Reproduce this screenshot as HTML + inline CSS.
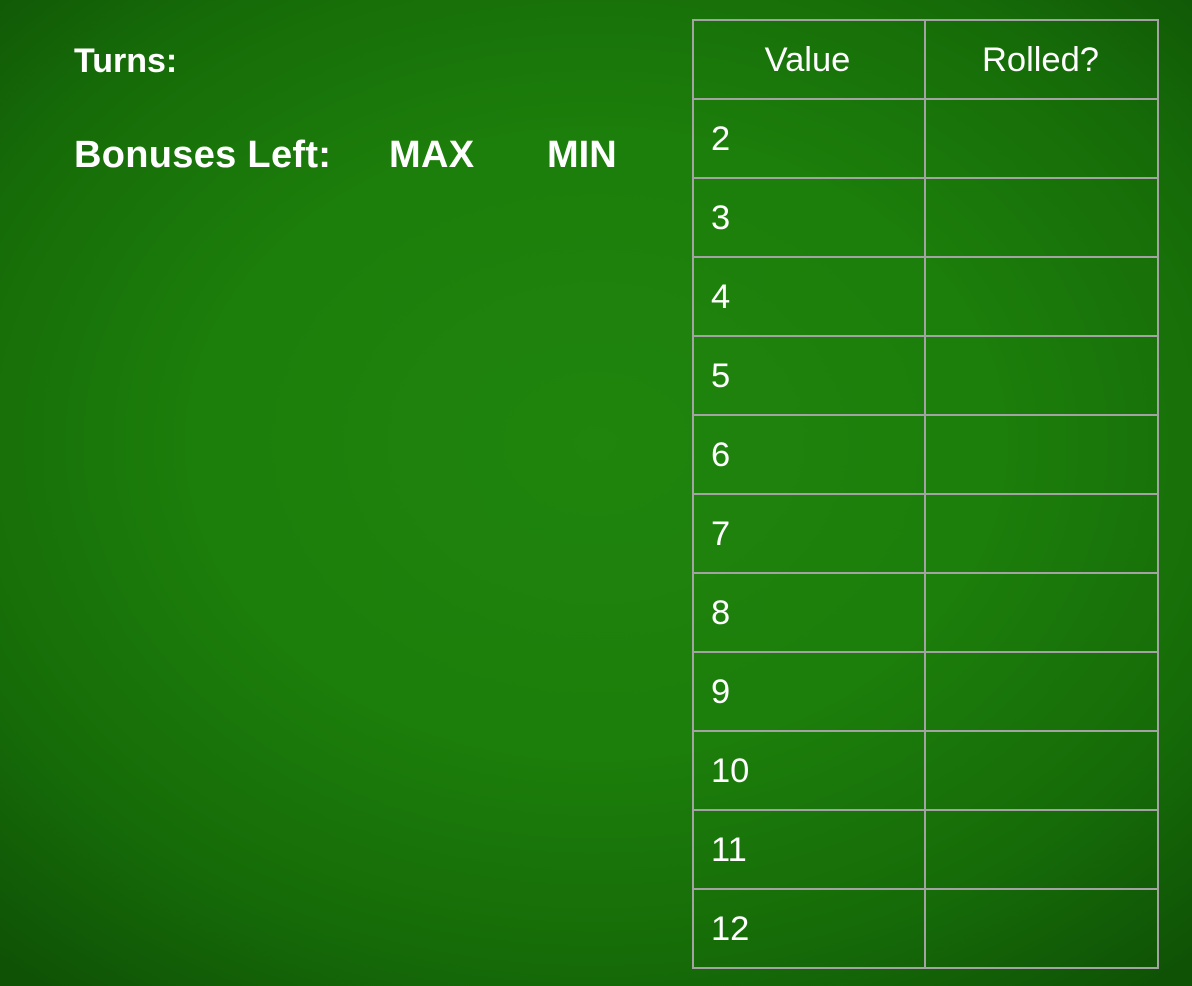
<!DOCTYPE html>
<html><head><style>
html,body{margin:0;padding:0}
body{width:1192px;height:986px;overflow:hidden;position:relative;font-family:"Liberation Sans",Arial,sans-serif;color:#fff;
background:radial-gradient(ellipse 75% 70% at 50% 45%,#1f850c 0%,#1c7e0b 45%,#166c08 75%,#0f5206 100%);}
.t{position:absolute;font-weight:bold;line-height:40px;white-space:nowrap}
.h{position:absolute;left:0;height:2px;background:#a3a3a3}
.c{position:absolute;font-size:34.5px;line-height:40px;white-space:nowrap}
.cc{position:absolute;font-size:34.5px;line-height:40px;text-align:center;width:231px}
</style></head><body>
<div class="t" style="left:74px;top:41px;font-size:34px">Turns:</div>
<div class="t" style="left:74px;top:135px;font-size:38px;letter-spacing:0.3px">Bonuses Left:</div>
<div class="t" style="left:389px;top:135px;font-size:38px;letter-spacing:0.3px">MAX</div>
<div class="t" style="left:547px;top:135px;font-size:38px">MIN</div>
<div style="position:absolute;left:692px;top:19px;width:463px;height:946px;border:2px solid #a3a3a3"></div>
<div style="position:absolute;left:924px;top:19px;width:2px;height:948px;background:#a3a3a3"></div>
<div style="position:absolute;left:692px;top:0;width:467px;height:986px">
<div class="h" style="top:98px;width:467px"></div>
<div class="h" style="top:177px;width:467px"></div>
<div class="h" style="top:256px;width:467px"></div>
<div class="h" style="top:335px;width:467px"></div>
<div class="h" style="top:414px;width:467px"></div>
<div class="h" style="top:493px;width:467px"></div>
<div class="h" style="top:572px;width:467px"></div>
<div class="h" style="top:651px;width:467px"></div>
<div class="h" style="top:730px;width:467px"></div>
<div class="h" style="top:809px;width:467px"></div>
<div class="h" style="top:888px;width:467px"></div>
</div>
<div class="cc" style="left:692px;top:40px">Value</div>
<div class="cc" style="left:925px;top:40px">Rolled?</div>
<div class="c" style="left:711px;top:119px">2</div>
<div class="c" style="left:711px;top:198px">3</div>
<div class="c" style="left:711px;top:277px">4</div>
<div class="c" style="left:711px;top:356px">5</div>
<div class="c" style="left:711px;top:435px">6</div>
<div class="c" style="left:711px;top:514px">7</div>
<div class="c" style="left:711px;top:593px">8</div>
<div class="c" style="left:711px;top:672px">9</div>
<div class="c" style="left:711px;top:751px">10</div>
<div class="c" style="left:711px;top:830px">11</div>
<div class="c" style="left:711px;top:909px">12</div>
</body></html>
